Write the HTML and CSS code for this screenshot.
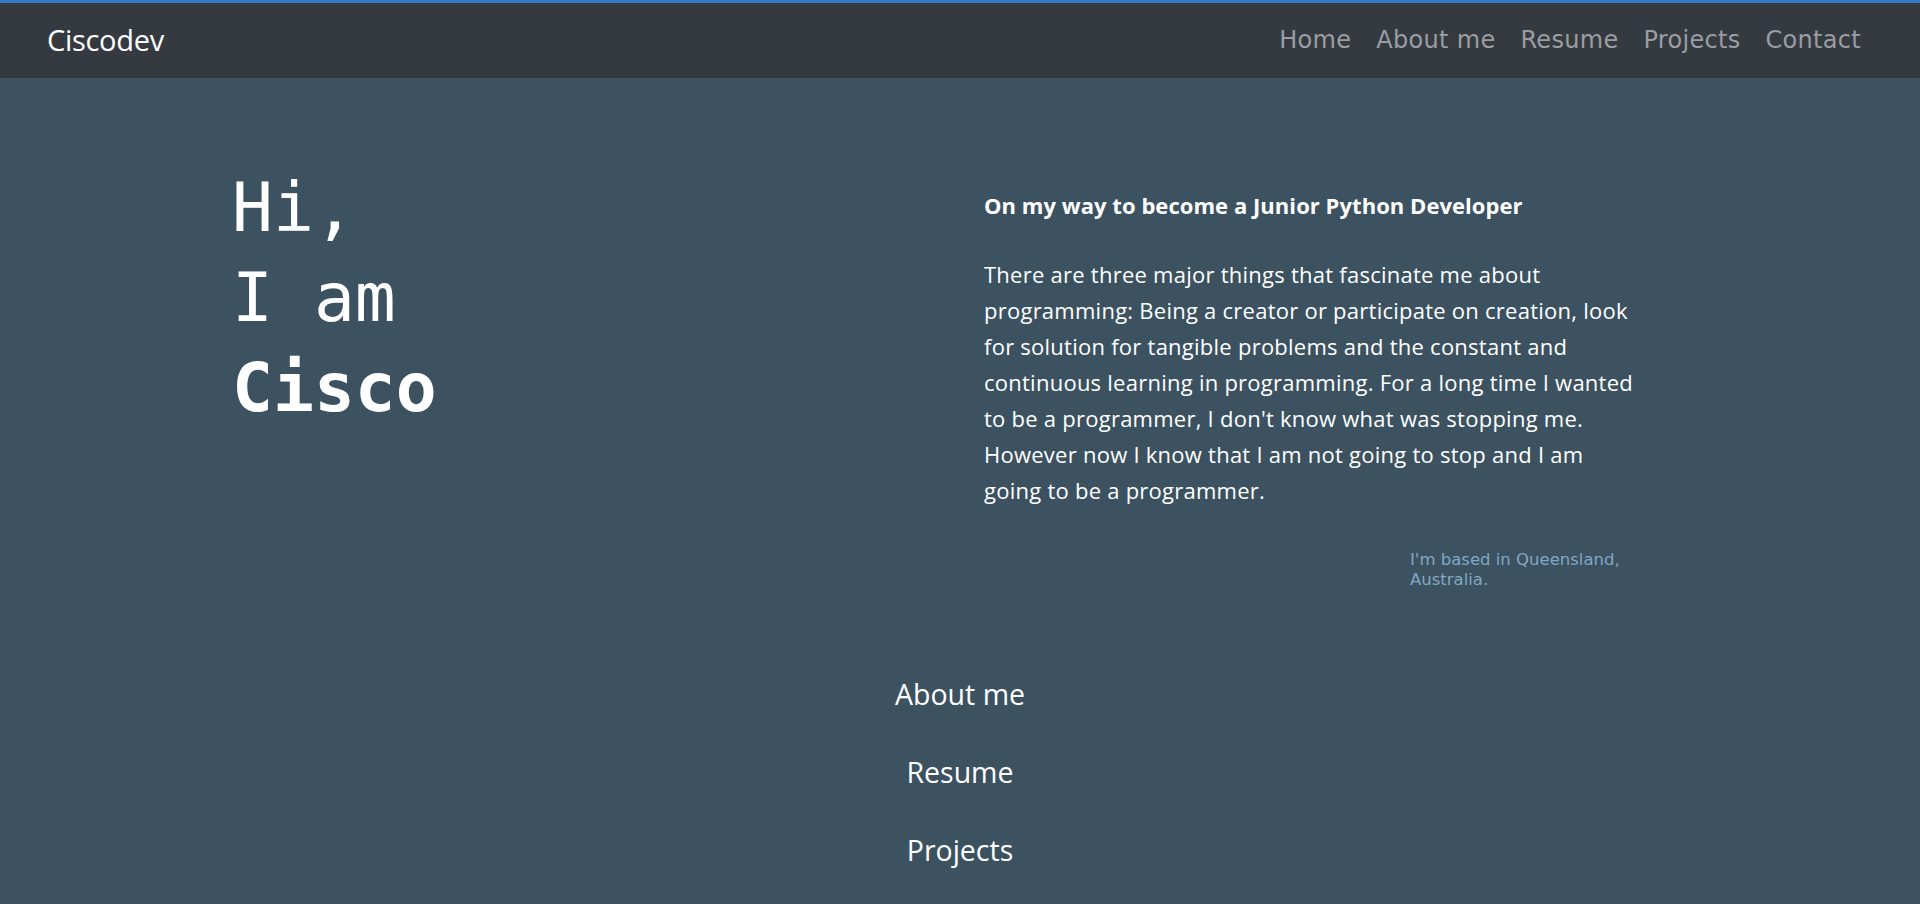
FILE: index.html
```html
<!DOCTYPE html>
<html lang="en">
<head>
<meta charset="utf-8">
<title>Ciscodev</title>
<link rel="stylesheet" href="styles.css">
</head>
<body>
<header class="navbar">
  <a class="brand" href="#">Ciscodev</a>
  <ul class="nav-links">
    <li><a href="#">Home</a></li>
    <li><a href="#">About me</a></li>
    <li><a href="#">Resume</a></li>
    <li><a href="#">Projects</a></li>
    <li><a href="#">Contact</a></li>
  </ul>
</header>
<main class="hero">
  <div class="hero-left">
    <h1 class="greeting">Hi,<br>I am<br><strong>Cisco</strong></h1>
  </div>
  <div class="hero-right">
    <p class="tagline">On my way to become a Junior Python Developer</p>
    <p class="intro">There are three major things that fascinate me about programming: Being a creator or participate on creation, look for solution for tangible problems and the constant and continuous learning in programming. For a long time I wanted to be a programmer, I don't know what was stopping me. However now I know that I am not going to stop and I am going to be a programmer.</p>
    <p class="location">I'm based in Queensland, Australia.</p>
  </div>
</main>
<nav class="section-links">
  <a href="#">About me</a>
  <a href="#">Resume</a>
  <a href="#">Projects</a>
</nav>
</body>
</html>
```

FILE: styles.css
```css
html, body {
  margin: 0;
  padding: 0;
}
body {
  background: #3c5260;
  color: #ffffff;
  font-family: "Open Sans", "Noto Sans", sans-serif;
  overflow: hidden;
  height: 904px;
}
a {
  text-decoration: none;
  color: inherit;
}
.navbar {
  box-sizing: border-box;
  height: 78px;
  border-top: 3px solid #3a78c8;
  background: #343a40;
  display: flex;
  align-items: center;
  justify-content: space-between;
  padding: 0 59px 2px 47px;
}
.brand {
  font-size: 29px;
  color: #ffffff;
  letter-spacing: -0.3px;
}
.nav-links {
  list-style: none;
  margin: 0;
  padding: 0;
  display: flex;
  gap: 25px;
}
.nav-links a {
  font-family: "DejaVu Sans", sans-serif;
  font-size: 24px;
  color: #9a9ea2;
  letter-spacing: 0.3px;
}
.hero {
  display: flex;
  padding: 85px 0 0 232px;
}
.hero-left {
  width: 752px;
}
.greeting {
  margin: 0;
  font-family: "DejaVu Sans Mono", monospace;
  font-size: 68px;
  font-weight: normal;
  line-height: 90px;
}
.greeting strong {
  font-weight: bold;
}
.hero-right {
  width: 655px;
  padding-top: 24px;
  display: flex;
  flex-direction: column;
}
.tagline {
  margin: 0;
  font-size: 22px;
  font-weight: 700;
  line-height: 36px;
  letter-spacing: 0.05px;
}
.intro {
  margin: 33px 0 0;
  font-size: 22px;
  line-height: 36px;
  letter-spacing: 0.25px;
}
.location {
  margin: 42px 0 0 426px;
  width: 229px;
  font-family: "DejaVu Sans", sans-serif;
  font-size: 16.5px;
  line-height: 20px;
  color: #82a7c2;
}
.section-links {
  display: flex;
  flex-direction: column;
  align-items: center;
  gap: 38px;
  padding-top: 84px;
}
.section-links a {
  font-size: 28.5px;
  line-height: 40px;
  color: #ffffff;
}
```
